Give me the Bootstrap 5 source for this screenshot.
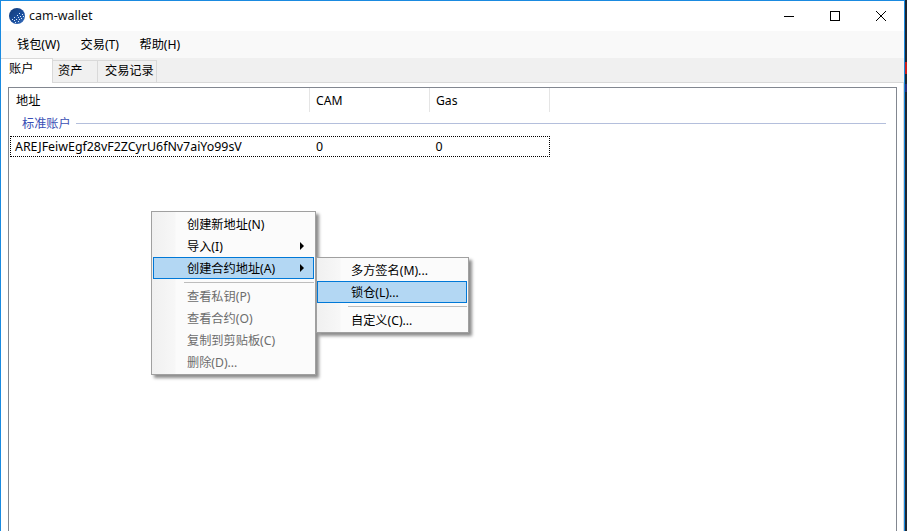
<!DOCTYPE html>
<html lang="zh-CN">
<head>
  <meta charset="UTF-8">
  <title>cam-wallet</title>
  <link href="https://cdn.jsdelivr.net/npm/bootstrap@5.3.3/dist/css/bootstrap.min.css" rel="stylesheet">
  <style>
    html, body { height: 100%; }
    body { background: linear-gradient(#c8201c, #c8201c) no-repeat 905px 62px / 2px 12px, linear-gradient(#2a2f7a, #2a2f7a) no-repeat 905px 84px / 2px 8px, #1d2733; font: 12.2px/16px "Noto Sans", "Noto Sans CJK SC", sans-serif; color: #000; overflow: hidden; }
    .app-window { width: 905px; height: 531px; background: #fff; border: 1px solid #1a8ae0; border-bottom: 0; position: relative; }
    .title-bar { height: 30px; font-size: 12.5px; color: #111; padding-left: 8px; }
    .win-btns { margin-left: auto; }
    .win-btn { width: 46px; height: 30px; display: flex; align-items: center; justify-content: center; }
    .menu-bar { height: 27px; background: #f9f9f9; padding-left: 6px; }
    .menu-item { padding: 0 10px; }
    .menu-item + .menu-item { margin-left: 0.5px; }
    .tab-strip { height: 24px; background: #f0f0f0; position: relative; }
    .tab-item { height: 22px; margin-top: 2px; background: #f0f0f0; border: 1px solid #d9d9d9; border-bottom: 0; border-left: 0; line-height: 20px; }
    .tab-item.is-active { height: 25px; margin-top: 0; width: 52px; background: #fff; padding-left: 8px; position: relative; z-index: 1; }
    .tab-assets { width: 45px; padding-left: 5px; }
    .tab-history { width: 59px; padding-left: 7px; }
    .tab-page { height: 449px; border-top: 1px solid #d9d9d9; padding: 4px 7px 0 7px; background: #fff; border-right: 1px solid #d9d9d9; }
    .list-box { height: 100%; border: 1px solid #828790; border-bottom: 0; width: 889px; }
    .list-head { height: 24px; }
    .col-addr { width: 301px; padding-left: 7px; }
    .col-num { width: 120px; padding-left: 6px; }
    .head-cell { height: 24px; border-right: 1px solid #e5e5e5; line-height: 26px; }
    .group-row { height: 22px; color: #3a4fb5; padding-left: 13px; gap: 5px; }
    .group-row span { margin-top: 2px; }
    .group-line { flex: 1; height: 1px; background: #b4bfdc; margin-right: 10px; }
    .data-row { width: 540px; height: 21px; margin-left: 1px; margin-top: 2px; border: 1px dotted #000; line-height: 19px; font-size: 12.4px; }
    .data-row .col-addr { width: 300px; padding-left: 4px; }
    .ctx-menu { position: absolute; border: 1px solid #a0a0a0; box-shadow: 3px 3px 3px rgba(0,0,0,.45); background: linear-gradient(to right, #f0f0f0 0, #f7f7f7 23px, #fbfbfb 24px); }
    .ctx-main { left: 150px; top: 210px; width: 165px; height: 164px; padding: 1px; }
    .ctx-sub { left: 315px; top: 256px; width: 153px; height: 76px; padding: 1px 1px 1px 0; }
    .ctx-item { height: 22px; line-height: 21px; padding-left: 33px; border: 1px solid transparent; position: relative; }
    .ctx-item.is-hot { background: #b3d7f3; border-color: #0078d7; }
    .ctx-item.is-off { color: #6d6d6d; }
    .ctx-arrow { position: absolute; right: 9px; top: 6px; width: 0; height: 0; border-left: 4px solid #000; border-top: 4px solid transparent; border-bottom: 4px solid transparent; }
    .ctx-sep { height: 1px; background: #bdbdbd; margin: 3px 0 2px 31px; }
  </style>
</head>
<body>

  <div class="app-window">
    <div class="title-bar d-flex align-items-center">
      <svg width="16" height="16" viewBox="0 0 16 16" class="me-1">
        <defs><linearGradient id="g" x1="0" y1="0" x2="1" y2="1"><stop offset="0" stop-color="#123a78"/><stop offset=".6" stop-color="#1c4f9e"/><stop offset="1" stop-color="#3f76c0"/></linearGradient></defs>
        <circle cx="8" cy="8" r="8" fill="url(#g)"/>
        <path d="M10 5h1v1h-1zM13 6h1v1h-1zM8 7h1v1H8zM11 8h1v1h-1zM14 8h1v1h-1zM5 9h1v1H5zM9 9h1v1H9zM12 10h1v1h-1zM3 11h1v1H3zM7 11h1v1H7zM10 11h1v1h-1zM5 12h1v1H5zM9 13h1v1H9zM6 14h1v1H6z" fill="#dbe8f8"/>
      </svg>
      <span>cam-wallet</span>
      <div class="win-btns d-flex">
        <div class="win-btn"><svg width="10" height="10"><path d="M0 5.5h10" stroke="#000"/></svg></div>
        <div class="win-btn"><svg width="10" height="10"><rect x=".5" y=".5" width="9" height="9" fill="none" stroke="#000"/></svg></div>
        <div class="win-btn"><svg width="10" height="10"><path d="M0 0l10 10M10 0L0 10" stroke="#000"/></svg></div>
      </div>
    </div>

    <div class="menu-bar d-flex align-items-center">
      <div class="menu-item">钱包(W)</div>
      <div class="menu-item">交易(T)</div>
      <div class="menu-item">帮助(H)</div>
    </div>

    <div class="tab-strip d-flex">
      <div class="tab-item is-active">账户</div>
      <div class="tab-item tab-assets">资产</div>
      <div class="tab-item tab-history">交易记录</div>
    </div>

    <div class="tab-page">
      <div class="list-box">
        <div class="list-head d-flex">
          <div class="head-cell col-addr">地址</div>
          <div class="head-cell col-num">CAM</div>
          <div class="head-cell col-num">Gas</div>
        </div>
        <div class="group-row d-flex align-items-center">
          <span>标准账户</span>
          <div class="group-line"></div>
        </div>
        <div class="data-row d-flex">
          <div class="col-addr">AREJFeiwEgf28vF2ZCyrU6fNv7aiYo99sV</div>
          <div class="col-num">0</div>
          <div class="col-num">0</div>
        </div>
      </div>
    </div>

    <div class="ctx-menu ctx-main">
      <div class="ctx-item">创建新地址(N)</div>
      <div class="ctx-item">导入(I)<span class="ctx-arrow"></span></div>
      <div class="ctx-item is-hot">创建合约地址(A)<span class="ctx-arrow"></span></div>
      <div class="ctx-sep"></div>
      <div class="ctx-item is-off">查看私钥(P)</div>
      <div class="ctx-item is-off">查看合约(O)</div>
      <div class="ctx-item is-off">复制到剪贴板(C)</div>
      <div class="ctx-item is-off">删除(D)...</div>
    </div>

    <div class="ctx-menu ctx-sub">
      <div class="ctx-item">多方签名(M)...</div>
      <div class="ctx-item is-hot">锁仓(L)...</div>
      <div class="ctx-sep"></div>
      <div class="ctx-item">自定义(C)...</div>
    </div>
  </div>

  <script src="https://cdn.jsdelivr.net/npm/bootstrap@5.3.3/dist/js/bootstrap.bundle.min.js"></script>
</body>
</html>
